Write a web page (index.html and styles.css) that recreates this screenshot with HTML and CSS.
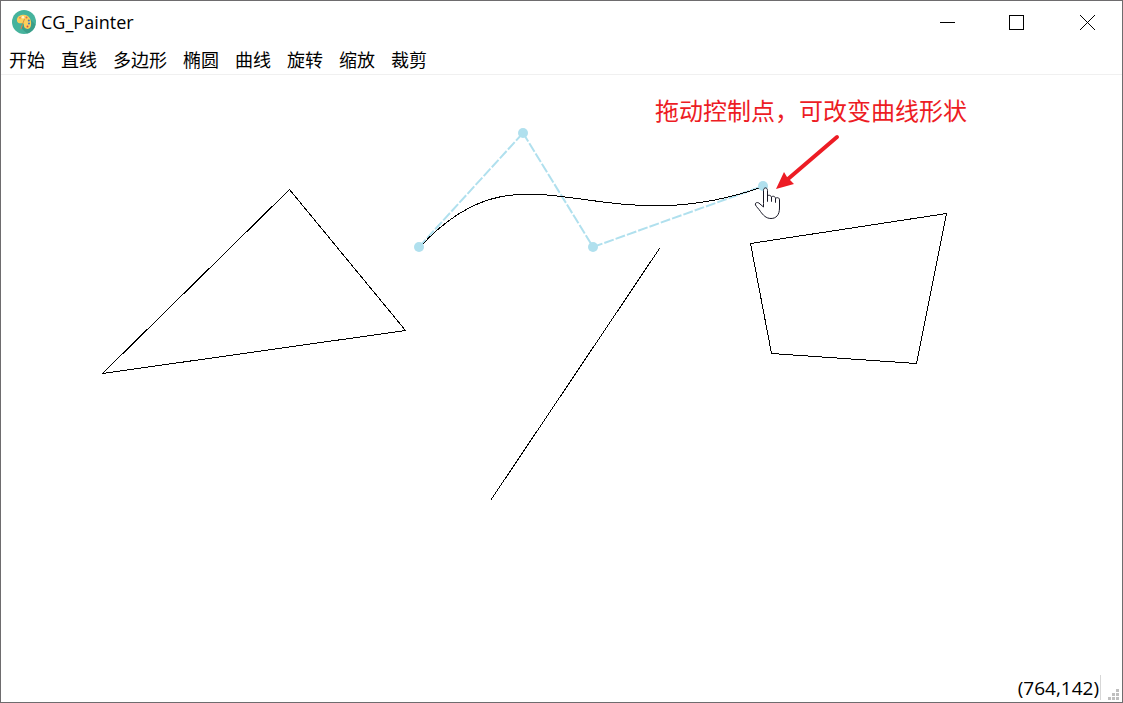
FILE: index.html
```html
<!DOCTYPE html>
<html lang="zh-CN">
<head>
<meta charset="utf-8">
<title>CG_Painter</title>
<link rel="stylesheet" href="styles.css">
</head>
<body>
<div class="window">
  <header class="titlebar">
    <svg class="app-icon" viewBox="0 0 24 24" aria-hidden="true">
      <circle cx="12" cy="12" r="12" fill="#46b39d"/>
      <path d="M18 9L23.500 14.500A12 12 0 0 1 15 23.600L9 18Z" fill="#3a9e8a"/>
      <path d="M5 9C6 5 12 4 15 5.500C19 7.500 20 13.500 18.500 17C17.500 19.500 14 19.500 12.500 17.500C11.500 16 12.500 14.500 11.500 13.500C10 12.500 8.500 14 6.500 13C5 12 4.700 10.500 5 9Z" fill="#fbcf5c"/>
      <circle cx="8" cy="7.800" r="1" fill="#f08a4b"/>
      <circle cx="11" cy="7.200" r="1.300" fill="#fff4cf"/>
      <circle cx="14.500" cy="7.500" r="1" fill="#e5644e"/>
      <circle cx="16.800" cy="10.500" r="1" fill="#3a75c4"/>
      <circle cx="17" cy="13.500" r="1" fill="#3a75c4"/>
      <circle cx="15.500" cy="16.500" r="1" fill="#d94f43"/>
      <path d="M12.500 9L9.500 17" stroke="#c9823c" stroke-width=".800"/>
      <path d="M10 15.500L9 19" stroke="#e87b4b" stroke-width="1"/>
    </svg>
    <h1 class="title">CG_Painter</h1>
    <div class="controls">
      <button class="control" type="button" aria-label="最小化"><svg class="glyph" viewBox="0 0 16 16"><path d="M1 8.500H16"/></svg></button>
      <button class="control" type="button" aria-label="最大化"><svg class="glyph" viewBox="0 0 16 16"><path d="M.5 1.500H14.500V15.500H.5Z"/></svg></button>
      <button class="control" type="button" aria-label="关闭"><svg class="glyph glyph-close" viewBox="0 0 16 16"><path d="M1 1L16 16M16 1L1 16"/></svg></button>
    </div>
  </header>
  <nav class="menubar">
    <button class="menu" type="button">开始</button>
    <button class="menu" type="button">直线</button>
    <button class="menu" type="button">多边形</button>
    <button class="menu" type="button">椭圆</button>
    <button class="menu" type="button">曲线</button>
    <button class="menu" type="button">旋转</button>
    <button class="menu" type="button">缩放</button>
    <button class="menu" type="button">裁剪</button>
  </nav>
  <main class="canvas">
    <svg class="drawing">
      <path class="guide" d="M418 172L522 58"/>
      <path class="guide" d="M522 58L592 172"/>
      <path class="guide" d="M592 172L762 111"/>
      <g class="shape" transform="translate(.5 .5)">
        <path d="M288 114L404 255L101 298Z"/>
        <path d="M658 173L489 425"/>
        <path d="M749 168L945 138L915 288L770 278Z"/>
        <path d="M418 172C522 58 592 172 762 111"/>
      </g>
      <g class="handle">
        <circle cx="418" cy="172" r="5"/>
        <circle cx="522" cy="58" r="5"/>
        <circle cx="592" cy="172" r="5"/>
        <circle cx="762" cy="111" r="5"/>
      </g>
      <path class="arrow-line" d="M836 62L787 104"/>
      <path class="arrow-head" d="M775 114L783 97L786 102L790 106L793 109Z"/>
      <path class="pointer" d="M762.500 128.500V115.500C762.500 112 766.500 112 766.500 115.500V122.500V126.500V121C767.500 119.500 770.500 120.500 770.500 122.500V126.500V122C772 120.500 774.500 121.500 774.500 123.500V127.500V123.500C776 122 778.500 122.500 778.500 125V133C778.500 140 775 143.500 770 143.500C765 143.500 762 140 759.500 136.500C757.500 133.500 755.500 132 754.500 130C753.500 127.500 757 126.500 759 129L762.500 132Z"/>
      <text class="note" x="654" y="45">拖动控制点，可改变曲线形状</text>
    </svg>
  </main>
  <footer class="statusbar">
    <output class="position">(764,142)</output>
    <svg class="grip" viewBox="0 0 11 11" aria-hidden="true"><path d="M8 0h3v3h-3zM4 4h3v3h-3zM8 4h3v3h-3zM0 8h3v3h-3zM4 8h3v3h-3zM8 8h3v3h-3z"/></svg>
  </footer>
</div>
</body>
</html>
```
FILE: styles.css
```css
* {
  box-sizing: border-box;
}

body {
  margin: 0;
  color: #000;
  font-family: "Open Sans", "Noto Sans CJK SC", sans-serif;
  font-size: 18px;
}

button {
  border: 0;
  padding: 0;
  background: none;
  color: inherit;
  font: inherit;
}

.window {
  display: flex;
  flex-direction: column;
  min-height: 100vh;
  border: 1px solid #6e6c6e;
  background: #fff;
}

.titlebar {
  display: flex;
  align-items: center;
  height: 42px;
  padding-left: 11px;
}

.app-icon {
  width: 24px;
  height: 24px;
  margin-right: 5px;
}

.title {
  margin: 0;
  font-size: 18px;
  font-weight: 400;
  line-height: 24px;
}

.controls {
  display: flex;
  margin-left: auto;
  height: 100%;
}

.control {
  display: grid;
  place-items: center;
  width: 70px;
}

.glyph {
  width: 16px;
  height: 16px;
  fill: none;
  stroke: #000;
  shape-rendering: crispEdges;
}

.glyph-close {
  shape-rendering: auto;
}

.menubar {
  display: flex;
  gap: 16px;
  height: 32px;
  padding: 3px 8px;
  border-bottom: 1px solid #f0f0f0;
  font-family: "Noto Sans CJK SC", sans-serif;
  line-height: 24px;
}

.canvas {
  display: flex;
  flex: 1;
}

.drawing {
  flex: 1;
  width: 100%;
}

.shape {
  fill: none;
  stroke: #000;
  shape-rendering: crispEdges;
}

.guide {
  fill: none;
  stroke: #b0e0ee;
  stroke-width: 2;
  stroke-dasharray: 10 2;
}

.handle {
  fill: #b0e0ee;
}

.arrow-line {
  stroke: #ed1c24;
  stroke-width: 4;
  stroke-linecap: round;
}

.arrow-head {
  fill: #ed1c24;
}

.pointer {
  fill: #fff;
  stroke: #161624;
  stroke-linejoin: round;
}

.note {
  fill: #ed1c24;
  font-family: "Noto Sans CJK SC", sans-serif;
  font-size: 24px;
}

.statusbar {
  display: flex;
  justify-content: flex-end;
  height: 28px;
  padding: 1px 3px 2px 0;
}

.position {
  padding-right: 1px;
  border-right: 1px solid #d7d7d7;
  font-size: 19px;
  line-height: 26px;
}

.grip {
  align-self: flex-end;
  width: 11px;
  height: 11px;
  margin-left: 7px;
  fill: #bfbfbf;
}
```
